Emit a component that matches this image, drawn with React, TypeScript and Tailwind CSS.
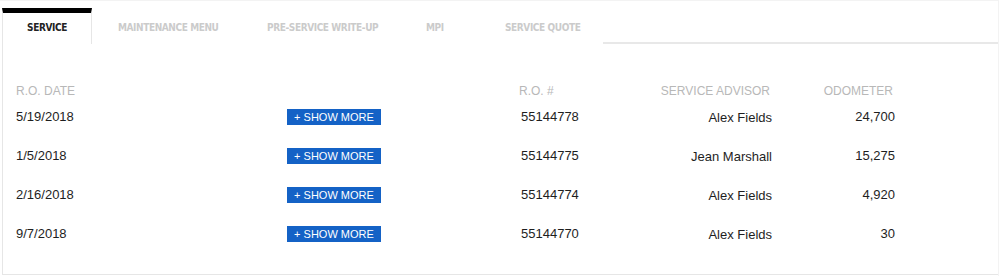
const tabs = [
  { label: 'MAINTENANCE MENU', w: 'w-[149px]' },
  { label: 'PRE-SERVICE WRITE-UP', w: 'w-[159px]' },
  { label: 'MPI', w: 'w-[79px]' },
  { label: 'SERVICE QUOTE', w: 'w-[124px]' },
];

const rows = [
  { date: '5/19/2018', ro: '55144778', advisor: 'Alex Fields', odo: '24,700' },
  { date: '1/5/2018', ro: '55144775', advisor: 'Jean Marshall', odo: '15,275' },
  { date: '2/16/2018', ro: '55144774', advisor: 'Alex Fields', odo: '4,920' },
  { date: '9/7/2018', ro: '55144770', advisor: 'Alex Fields', odo: '30' },
];

const tabFont = "font-['DejaVu_Sans_Condensed','Liberation_Sans',sans-serif]";
const cols = 'grid grid-cols-[271px_232px_140px_113px_123px]';

const App = () => {
  return (
    <div className="w-[999px] h-[276px] bg-white border-t border-r border-[#f3f3f3] font-['Liberation_Sans',Arial,sans-serif]">
      <div className="pl-[2px]">
        {/* tab strip */}
        <div className="flex h-[43px] items-end">
          <div
            className={`w-[90px] h-[36px] border-t-[5px] border-black border-l border-r border-l-[#e6e6e6] border-r-[#e6e6e6] flex items-center justify-center pb-[3px] text-[10px] font-bold tracking-[-0.4px] text-[#222] ${tabFont}`}
          >
            SERVICE
          </div>
          {tabs.map((t) => (
            <div
              key={t.label}
              className={`${t.w} h-[36px] flex items-center pl-[26px] pt-[2px] text-[10px] font-bold tracking-[-0.4px] text-[#cbcbcb] whitespace-nowrap ${tabFont}`}
            >
              {t.label}
            </div>
          ))}
          <div className="flex-1 h-[36px] border-b-2 border-[#e8e8e8]" />
        </div>

        {/* table */}
        <div className="border-l border-b border-[#e6e6e6] pt-[38px] pb-[21px] pl-[13px]">
          <div className={`${cols} h-[15px] items-center text-[12px] text-[#b8b8b8]`}>
            <div>R.O. DATE</div>
            <div />
            <div>R.O. #</div>
            <div className="text-right pr-[2px]">SERVICE ADVISOR</div>
            <div className="text-right pr-[2px]">ODOMETER</div>
          </div>
          {rows.map((r) => (
            <div key={r.ro} className={`${cols} h-[39px] items-center text-[13px] text-[#1e1e1e]`}>
              <div>{r.date}</div>
              <div>
                <button className="w-[94px] h-[16px] bg-[#1462c6] text-white text-[11px] leading-[16px] flex items-center justify-center">
                  + SHOW MORE
                </button>
              </div>
              <div className="pl-[2px]">{r.ro}</div>
              <div className="text-right pt-[2px]">{r.advisor}</div>
              <div className="text-right pt-[1px]">{r.odo}</div>
            </div>
          ))}
        </div>
      </div>
    </div>
  );
};

export default App;
